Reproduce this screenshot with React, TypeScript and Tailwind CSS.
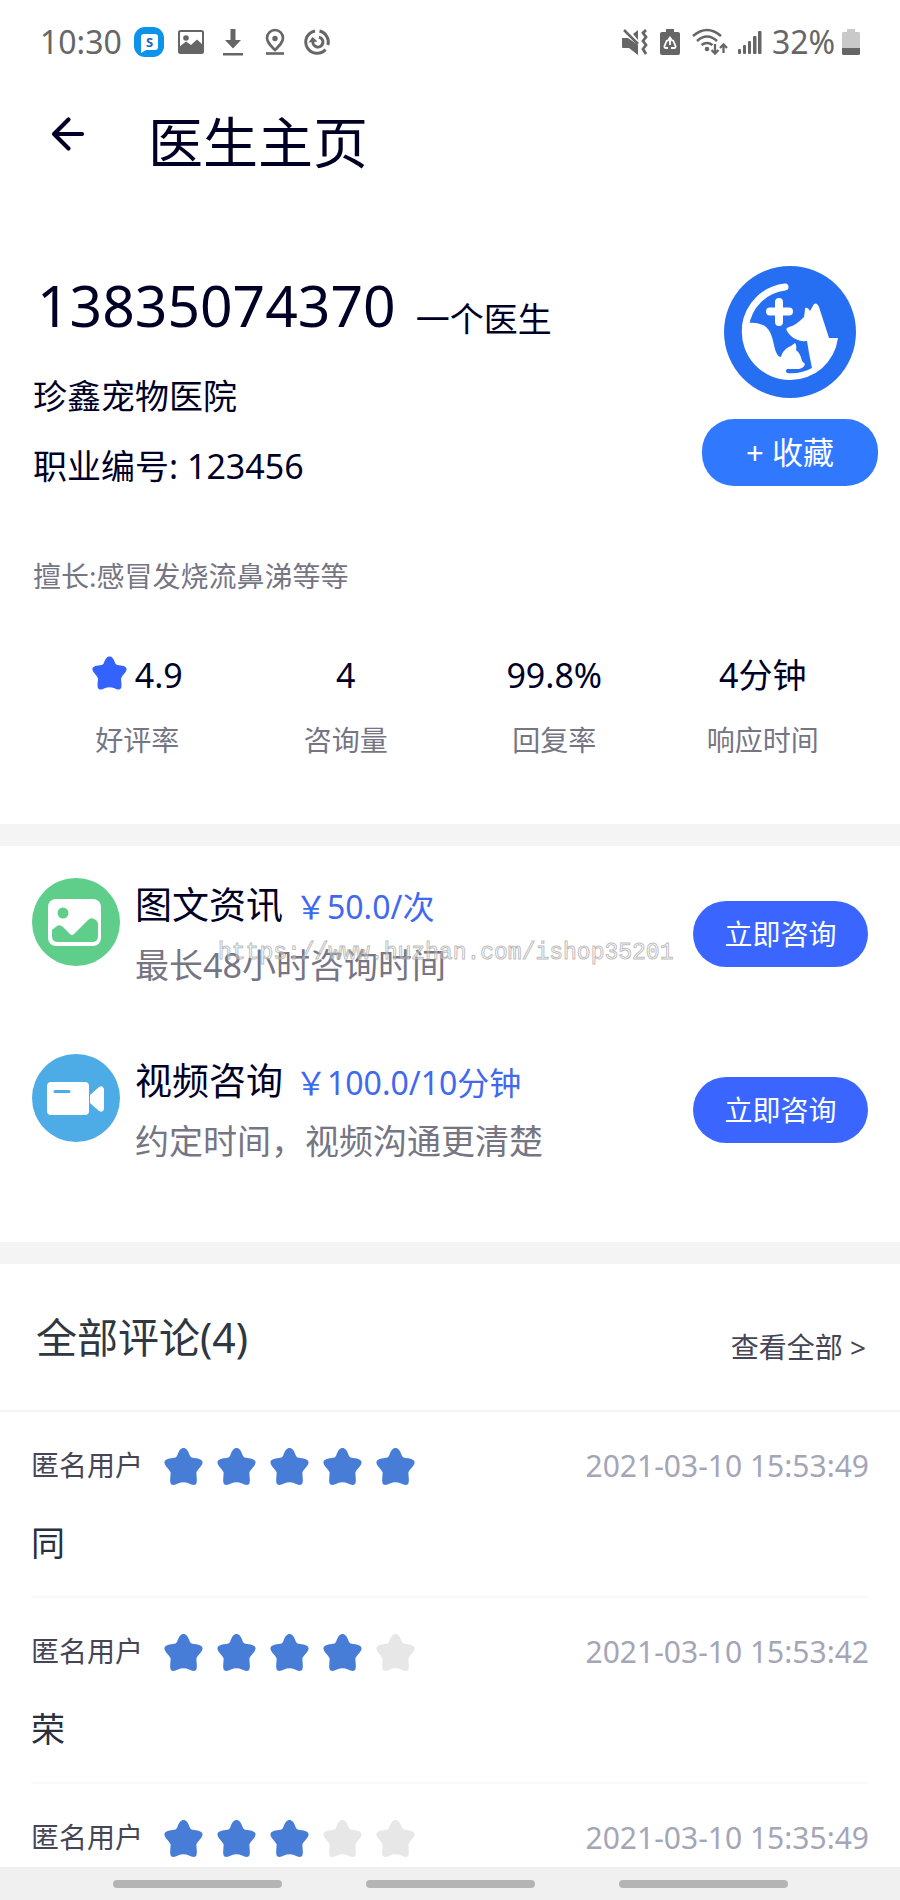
import { FC, ReactNode } from "react";

interface Stat {
  value: string;
  label: string;
  star?: boolean;
}

interface Service {
  title: string;
  price: string;
  description: string;
  icon: ReactNode;
}

interface Review {
  user: string;
  score: number;
  date: string;
  content: string;
}

const STAR_PATH =
  "M19.5 0C22 0 24 2 26 8Q27 10 30 10C36 10.5 39 12 38.5 15C38 18 34 21 32.5 24C32 27 33.5 31 32.5 35C31.5 38 28 37 25 35.5Q19.5 33 14 35.5C11 37 7.5 38 6.5 35C5.5 31 7 27 6.5 24C5 21 1 18 .5 15C0 12 3 10.5 9 10Q12 10 13 8C15 2 17 0 19.5 0Z";

const Star: FC<{ className: string }> = ({ className }) => (
  <svg viewBox="0 0 39 37" className={className} fill="currentColor" aria-hidden="true">
    <path d={STAR_PATH} />
  </svg>
);

const ImageIcon = () => (
  <svg viewBox="0 0 88 88" className="size-[88px] shrink-0" aria-hidden="true">
    <circle cx="44" cy="44" r="44" fill="#5fce8b" />
    <rect x="16" y="21" width="53" height="47" rx="8" fill="#fff" />
    <circle cx="31" cy="35" r="5.5" fill="#5fce8b" />
    <path
      d="M20 52L25 48Q28 46 31 49L38 56Q40 58 42 56L56 42Q59 39 62 41Q66 43 66 46V58Q66 64 60 64H26Q20 64 20 58Z"
      fill="#5fce8b"
    />
  </svg>
);

const VideoIcon = () => (
  <svg viewBox="0 0 88 88" className="size-[88px] shrink-0" aria-hidden="true">
    <circle cx="44" cy="44" r="44" fill="#4dabe6" />
    <rect x="15" y="28" width="42" height="33" rx="4" fill="#fff" />
    <path d="M58 41L67 33Q71 31 72 35V55Q71 59 67 57L58 49Z" fill="#fff" />
    <path d="M23 37.500H37" stroke="#4dabe6" strokeWidth="3" strokeLinecap="round" />
  </svg>
);

const stats: Stat[] = [
  { value: "4.9", label: "好评率", star: true },
  { value: "4", label: "咨询量" },
  { value: "99.8%", label: "回复率" },
  { value: "4分钟", label: "响应时间" },
];

const services: Service[] = [
  {
    title: "图文资讯",
    price: "￥50.0/次",
    description: "最长48小时咨询时间",
    icon: <ImageIcon />,
  },
  {
    title: "视频咨询",
    price: "￥100.0/10分钟",
    description: "约定时间，视频沟通更清楚",
    icon: <VideoIcon />,
  },
];

const reviews: Review[] = [
  { user: "匿名用户", score: 5, date: "2021-03-10 15:53:49", content: "同" },
  { user: "匿名用户", score: 4, date: "2021-03-10 15:53:42", content: "荣" },
  { user: "匿名用户", score: 3, date: "2021-03-10 15:35:49", content: "" },
];

const StatusBar = () => (
  <div className="flex h-[84px] shrink-0 items-center justify-between px-10 text-[32px] leading-[42px] text-[#666]">
    <div className="flex items-center gap-3">
      <span className="w-[82px]">10:30</span>
      <svg viewBox="0 0 30 30" className="size-[30px]">
        <rect width="30" height="30" rx="11" fill="#0e93ea" />
        <path d="M10 7H21Q24 7 24 10V20Q24 23 21 23H12L7 26V10Q7 7 10 7Z" fill="#fff" />
        <text x="15.500" y="20" textAnchor="middle" fontSize="13" fontWeight="700" fill="#1769c4">
          S
        </text>
      </svg>
      <svg viewBox="0 0 30 30" className="size-[30px]" fill="none" stroke="currentColor">
        <rect x="3" y="4" width="24" height="22" rx="1.500" strokeWidth="2" />
        <circle cx="10" cy="11" r="2.800" fill="currentColor" stroke="none" />
        <path d="M3 20L10 14.500L15 18L21 12.500L27 18V26H3Z" fill="currentColor" stroke="none" />
      </svg>
      <svg viewBox="0 0 30 30" className="size-[30px]" fill="currentColor">
        <path d="M12.500 2H17.500V13H23L15 21.500L7 13H12.500Z" />
        <rect x="5" y="26" width="20" height="2.500" />
      </svg>
      <svg viewBox="0 0 30 30" className="size-[30px]" fill="none" stroke="currentColor" strokeWidth="2.600">
        <path d="M15 23C10 18 7 15 7 11A8 8 0 0 1 23 11C23 15 20 18 15 23Z" />
        <circle cx="15" cy="11.500" r="2.700" fill="currentColor" stroke="none" />
        <path d="M6 26.500H24" />
      </svg>
      <svg viewBox="0 0 30 30" className="size-[30px]" fill="none" stroke="currentColor" strokeWidth="3">
        <path d="M17.500 4A11.300 11.300 0 0 1 25.900 18" />
        <path d="M23.500 22.500A11.300 11.300 0 1 1 13 3.900" />
        <path d="M11 14A5 5 0 1 0 17 10.200" />
        <path d="M6.500 15.500L10.500 10L15.500 14.500Z" fill="currentColor" stroke="none" />
      </svg>
    </div>
    <div className="flex items-center">
      <svg viewBox="0 0 26 28" className="mr-3 h-7 w-[26px]" fill="none" stroke="currentColor">
        <path d="M0 10H6L16 17V27L7 20H1Q0 20 0 19Z" fill="currentColor" stroke="none" />
        <path d="M11 6L16 2V12Z" fill="currentColor" stroke="none" />
        <path d="M2 2L16 16" strokeWidth="2.500" />
        <path d="M24 2L21 5L24 9L21 13L24 17L21 21L24 26" strokeWidth="2.800" />
      </svg>
      <svg viewBox="0 0 20 28" className="mr-3 h-7 w-5">
        <path
          d="M6 1H14V4H18Q20 4 20 6V25Q20 27 18 27H2Q0 27 0 25V6Q0 4 2 4H6Z"
          fill="currentColor"
        />
        <path
          d="M7.500 13L10 9.500L12.500 13M10 10V17M7 12L4.500 18Q4 20 6 20H8M13 12L15.500 18Q16 20 14 20H11"
          fill="none"
          stroke="#fff"
          strokeWidth="1.800"
        />
      </svg>
      <svg viewBox="0 0 36 28" className="mr-[10px] h-7 w-9" fill="none" stroke="currentColor" strokeWidth="2.600">
        <path d="M1 8Q15 -4 29 8" />
        <path d="M5 13Q15 4 25 13" />
        <path d="M9.500 17Q15 13 20.500 17" />
        <circle cx="15" cy="21" r="2.300" fill="currentColor" stroke="none" />
        <path d="M23 16V25M19.500 22L23 25.500L26.500 22M31.500 25V17M28 20L31.500 16.500L35 20" strokeWidth="2.300" />
      </svg>
      <svg viewBox="0 0 24 26" className="mr-[10px] h-[26px] w-6" fill="currentColor">
        <rect y="20" width="3" height="5" rx="1" />
        <rect x="5" y="16" width="3" height="9" rx="1" />
        <rect x="10" y="12" width="3" height="13" rx="1" />
        <rect x="15" y="7" width="3.500" height="18" rx="1" />
        <rect x="20" y="2" width="3.500" height="23" rx="1" />
      </svg>
      <span className="w-[70px]">32%</span>
      <svg viewBox="0 0 18 28" className="h-7 w-[18px]">
        <path d="M5 1H13V4H17L18 5V20H0V5L1 4H5Z" fill="#c9c9c9" />
        <path d="M0 20H18V26L17 27H1L0 26Z" fill="currentColor" />
      </svg>
    </div>
  </div>
);

const Header = () => (
  <header className="flex h-[116px] items-center pl-[50px] text-[#000026]">
    <button type="button" aria-label="返回" className="mr-[62px] pb-4">
      <svg
        viewBox="0 0 36 36"
        className="size-9"
        fill="none"
        stroke="currentColor"
        strokeWidth="4.200"
        strokeLinecap="round"
        strokeLinejoin="round"
      >
        <path d="M18.500 3.500L4 18L18.500 32.500M4 18H32" />
      </svg>
    </button>
    <h1 className="text-[55px] leading-[78px]">医生主页</h1>
  </header>
);

const Avatar = () => (
  <svg viewBox="0 0 132 132" className="size-[132px]" role="img" aria-label="头像">
    <circle cx="66" cy="66" r="66" fill="#276ff2" />
    <g stroke="#fff" fill="none" strokeLinecap="round">
      <path d="M61 21A45 45 0 0 0 21.500 60" strokeWidth="7" />
      <path d="M55 36V56M46 45.500H65" strokeWidth="8" />
    </g>
    <path
      d="M24 57C30 56 37 57 42 61C49 67 49 78 52 86Q54 91 57 91C58 86 62 82 67 80L71 77Q73 79 72 84C76 87 77 91 78 95L81 98Q80 102 75 103L63 103Q61 105 63 107C72 108 81 106 88 102L85 87L83 75C75 76 67 72 63 65Q61 62 65 61C70 60 75 56 80 51Q81 46 81 42Q84 41 86 45L90 38Q93 36 95 41L105 72H114A48 48 0 0 1 66 114A48 48 0 0 1 18 62Z"
      fill="#fff"
    />
  </svg>
);

const Profile = () => (
  <section className="px-[33px] pt-[66px] pb-16 text-[#000026]">
    <div className="-mr-[11px] flex justify-between">
      <div className="text-[34px] leading-[70px]">
        <div className="flex items-end gap-5 pb-[17px] pl-1">
          <h2 className="text-[57px] leading-[78px]">13835074370</h2>
          <span className="leading-[50px]">一个医生</span>
        </div>
        <p>珍鑫宠物医院</p>
        <p>职业编号: 123456</p>
      </div>
      <div className="flex flex-col items-center">
        <Avatar />
        <button
          type="button"
          className="mt-[21px] h-[67px] w-[176px] rounded-[32px] bg-[#3079ff] text-[31px] text-white"
        >
          + 收藏
        </button>
      </div>
    </div>
    <p className="mt-[55px] text-[28px] leading-10 text-[#757584]">擅长:感冒发烧流鼻涕等等</p>
    <dl className="mt-[54px] grid grid-cols-4">
      {stats.map(({ value, label, star }) => (
        <div key={label} className="flex flex-col-reverse items-center gap-5">
          <dt className="text-[28px] leading-10 text-[#757584]">{label}</dt>
          <dd className="flex items-center gap-2 text-[34px] leading-[50px]">
            {star && <Star className="mb-1 h-[34px] w-[35px] text-[#3462ff]" />}
            {value}
          </dd>
        </div>
      ))}
    </dl>
  </section>
);

const ServiceItem: FC<Service> = ({ title, price, description, icon }) => (
  <li className="flex h-[176px] items-start pt-8">
    {icon}
    <div className="ml-[15px] flex-1">
      <div className="flex items-baseline gap-3 leading-[54px]">
        <h3 className="text-[37px] text-[#000026]">{title}</h3>
        <span className="text-[32px] text-[#4169f0]">{price}</span>
      </div>
      <p className="mt-1 text-[34px] leading-[54px] text-[#757584]">{description}</p>
    </div>
    <button
      type="button"
      className="mt-[23px] h-[66px] w-[175px] rounded-full bg-[#3a65ff] text-[28px] text-white"
    >
      立即咨询
    </button>
  </li>
);

const ReviewItem: FC<Review> = ({ user, score, date, content }) => (
  <li className="h-[186px] border-b-2 border-[#f9f9f9] pt-[30px]">
    <div className="flex h-12 items-center">
      <span className="pb-[2px] text-[28px] text-[#464556]">{user}</span>
      <div className="ml-[21px] flex gap-[14px]" role="img" aria-label={`${score}星`}>
        {[1, 2, 3, 4, 5].map((n) => (
          <Star
            key={n}
            className={n <= score ? "h-[37px] w-[39px] text-[#477dd7]" : "h-[37px] w-[39px] text-[#e7e7e7]"}
          />
        ))}
      </div>
      <time className="ml-auto pb-[2px] text-[30px] text-[#a5a5b8]">{date}</time>
    </div>
    <p className="mt-7 text-[34px] leading-[50px] text-[#28303f]">{content}</p>
  </li>
);

const App = () => (
  <div className="flex h-screen flex-col bg-white font-['Noto_Sans','Noto_Sans_CJK_SC',sans-serif]">
    <StatusBar />
    <main className="min-h-0 flex-1 overflow-hidden">
      <Header />
      <Profile />
      <section className="relative h-[440px] border-y-[22px] border-[#f4f4f4] px-8">
        <ul>
          {services.map((service) => (
            <ServiceItem key={service.title} {...service} />
          ))}
        </ul>
        <span className="pointer-events-none absolute top-[93px] left-[218px] font-['Liberation_Mono',monospace] text-[23px] leading-7 text-white/40 [-webkit-text-stroke:1px_#a0a0a0b0]">
          https://www.huzhan.com/ishop35201
        </span>
      </section>
      <section>
        <div className="flex h-[148px] items-center justify-between border-b-2 border-[#f4f4f4] pr-[34px] pl-9">
          <h2 className="pt-[2px] text-[41px] text-[#2f3740]">全部评论(4)</h2>
          <a href="#reviews" className="pt-5 text-[28px] text-[#464556]">
            查看全部 &gt;
          </a>
        </div>
        <ul id="reviews" className="px-[31px]">
          {reviews.map((review) => (
            <ReviewItem key={review.date} {...review} />
          ))}
        </ul>
      </section>
    </main>
    <nav className="flex h-[33px] shrink-0 items-center justify-center gap-[84px] bg-[#f0f0f0]">
      <button type="button" aria-label="最近任务" className="h-2 w-[169px] rounded-full bg-[#b4b4b4]" />
      <button type="button" aria-label="主屏幕" className="h-2 w-[169px] rounded-full bg-[#b4b4b4]" />
      <button type="button" aria-label="返回上级" className="h-2 w-[169px] rounded-full bg-[#b4b4b4]" />
    </nav>
  </div>
);

export default App;
